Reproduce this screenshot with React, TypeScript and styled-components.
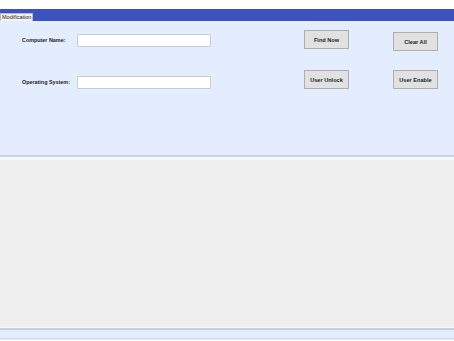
import styled, { createGlobalStyle } from "styled-components";

const GlobalStyle = createGlobalStyle`
    html, body {
        margin: 0;
        padding: 0;
        background: #ffffff;
        font-family: "Liberation Sans", Arial, sans-serif;
    }
`;

const Screen = styled.div`
    width: 454px;
    height: 341px;
    display: flex;
    flex-direction: column;
    overflow: hidden;
`;

const TopGap = styled.div`
    height: 9px;
    background: #ffffff;
`;

const TabBar = styled.div`
    height: 12px;
    background: #3d51c1;
    display: flex;
    align-items: flex-end;
`;

const Tab = styled.div`
    height: 8px;
    padding: 0 1px 0 1px;
    box-sizing: border-box;
    background: #f2f2f2;
    border: 1px solid #b9b9b9;
    border-bottom: none;
    font-size: 5.5px;
    line-height: 7px;
    color: #222;
`;

const Panel = styled.div`
    height: 134px;
    box-sizing: border-box;
    background: #e3edfd;
    padding: 9px 0 0 22px;
    display: flex;
    flex-direction: column;
    gap: 20px;
`;

const Row = styled.div<{ $height: number }>`
    display: flex;
    align-items: flex-start;
    height: ${(p) => p.$height}px;
`;

const Label = styled.label<{ $top: number }>`
    width: 55px;
    margin-top: ${(p) => p.$top}px;
    font-size: 5.4px;
    line-height: 8px;
    font-weight: 700;
    color: #1e1e1e;
    white-space: nowrap;
`;

const Input = styled.input<{ $top: number }>`
    width: 134px;
    height: 13px;
    margin: ${(p) => p.$top}px 93px 0 0;
    box-sizing: border-box;
    background: #ffffff;
    border: 1px solid #c6ccd4;
    border-radius: 1px;
    padding: 0 3px;
    font-size: 6px;
`;

const Button = styled.button<{ $top: number; $gap?: number }>`
    width: 45px;
    height: 19px;
    margin: ${(p) => p.$top}px ${(p) => p.$gap ?? 0}px 0 0;
    box-sizing: border-box;
    background: #e1e1e1;
    border: 1px solid #aeaeae;
    padding: 0;
    font-family: "Liberation Sans", Arial, sans-serif;
    font-size: 5.6px;
    font-weight: 700;
    color: #1e1e1e;
    cursor: pointer;
`;

const Divider = styled.div`
    height: 5px;
    border-top: 2px solid #c7d5e8;
    background: #f7f7f7;
    box-sizing: border-box;
`;

const Results = styled.div`
    height: 167px;
    background: #efefef;
`;

const StatusBar = styled.div`
    height: 13px;
    box-sizing: border-box;
    border-top: 1px solid #f7f7f7;
    background: #e3edfd;
    &::before {
        content: "";
        display: block;
        height: 2px;
        background: #c3d1e4;
    }
    &::after {
        content: "";
        display: block;
        height: 1px;
        margin-top: 8px;
        background: #dadada;
    }
`;

export default function App() {
    return (
        <>
            <GlobalStyle />
            <Screen>
                <TopGap />
                <TabBar>
                    <Tab>Modification</Tab>
                </TabBar>
                <Panel>
                    <Row $height={20}>
                        <Label $top={6}>Computer Name:</Label>
                        <Input $top={4} />
                        <Button $top={0} $gap={44}>Find Now</Button>
                        <Button $top={2}>Clear All</Button>
                    </Row>
                    <Row $height={20}>
                        <Label $top={8}>Operating System:</Label>
                        <Input $top={6} />
                        <Button $top={0} $gap={44}>User Unlock</Button>
                        <Button $top={0}>User Enable</Button>
                    </Row>
                </Panel>
                <Divider />
                <Results />
                <StatusBar />
            </Screen>
        </>
    );
}
